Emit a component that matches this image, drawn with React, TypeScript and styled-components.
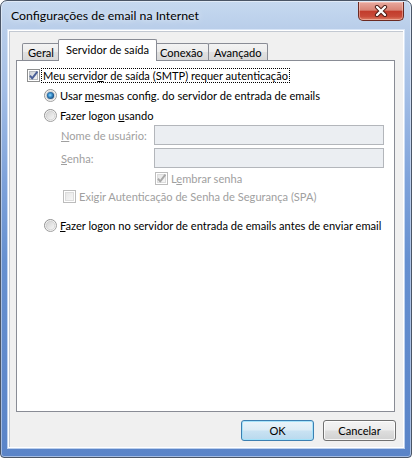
import React, { useId } from 'react';
import styled, { createGlobalStyle } from 'styled-components';

const GlobalStyle = createGlobalStyle`
  html, body {
    margin: 0;
    padding: 0;
    background: #ffffff;
  }
  body {
    font-family: "Segoe UI", Lato, "Noto Sans", sans-serif;
    font-size: 11.1px;
    color: #000;
  }
`;

const Window = styled.div`
  box-sizing: border-box;
  width: 412px;
  height: 458px;
  border: 1px solid #4a5566;
  border-radius: 7px 7px 4px 4px;
  padding: 0 7px 9px 7px;
  display: flex;
  flex-direction: column;
  background: linear-gradient(
    180deg,
    #c6d9f0 0px,
    #b8cde9 30px,
    #a3bee6 90px,
    #7ea2da 180px,
    #6690d0 260px,
    #5a84c8 100%
  );
  box-shadow: inset 0 0 0 1px rgba(255, 255, 255, 0.45);
`;

const TitleBar = styled.div`
  height: 29px;
  display: flex;
  align-items: center;
  justify-content: space-between;
`;

const Title = styled.div`
  padding-left: 3px;
  font-size: 12.3px;
  color: #000;
  text-shadow: 0 0 6px rgba(255, 255, 255, 0.9);
`;

const CloseButton = styled.div`
  align-self: flex-start;
  box-sizing: border-box;
  width: 46px;
  height: 19px;
  margin-top: 1px;
  border: 1px solid #6b2a22;
  border-top: none;
  border-radius: 0 0 5px 5px;
  background: linear-gradient(180deg, #e8a99f 0%, #d98476 45%, #c23c2c 52%, #c84a38 80%, #de7f66 100%);
  box-shadow: inset 0 0 0 1px rgba(255, 220, 210, 0.45);
  display: flex;
  align-items: center;
  justify-content: center;
`;

const Client = styled.div`
  flex: 1;
  box-sizing: border-box;
  display: flex;
  flex-direction: column;
  background: #f0f0f0;
  border: 1px solid #ffffff;
  box-shadow: inset 1px 1px 0 #c3c9d2, 0 0 0 1px rgba(230, 240, 252, 0.7);
  padding: 8px 8px 6px 7px;
`;

const TabStrip = styled.div`
  display: flex;
  align-items: flex-end;
  height: 22px;
  padding-left: 6px;
  margin-bottom: -1px;
  position: relative;
  z-index: 1;
`;

const Tab = styled.div<{ $active?: boolean }>`
  box-sizing: border-box;
  display: flex;
  align-items: center;
  justify-content: center;
  border: 1px solid #898c95;
  border-bottom: none;
  border-radius: 2px 2px 0 0;
  white-space: nowrap;
  height: ${(p) => (p.$active ? '22px' : '17px')};
  padding: ${(p) => (p.$active ? '0 7px 2px' : '0 5px')};
  margin: ${(p) => (p.$active ? '0 -2px 0 -2px' : '0 0 1px -1px')};
  background: ${(p) =>
    p.$active ? '#ffffff' : 'linear-gradient(180deg, #f3f3f3 0%, #ececec 50%, #e1e1e1 51%, #d8d8d8 100%)'};
  position: relative;
  z-index: ${(p) => (p.$active ? 2 : 1)};

  &:first-child {
    margin-left: 0;
  }
`;

const Panel = styled.div`
  flex: 1;
  box-sizing: border-box;
  background: #ffffff;
  border: 1px solid #898c95;
  padding: 6px 10px 0 10px;
  display: flex;
  flex-direction: column;
`;

const Row = styled.div<{ $indent?: number; $gap?: number }>`
  display: flex;
  align-items: center;
  height: 16px;
  margin-left: ${(p) => p.$indent ?? 0}px;
  margin-top: ${(p) => p.$gap ?? 0}px;
  white-space: nowrap;
`;

const Text = styled.span<{ $disabled?: boolean }>`
  margin-left: 3px;
  color: ${(p) => (p.$disabled ? '#a0a0a0' : '#000000')};
`;

const FocusText = styled.span`
  margin-left: 1px;
  padding: 0 1px 0 1px;
  line-height: 13px;
  border: 1px dotted #000;
`;

const FieldRow = styled.div<{ $gap?: number }>`
  display: flex;
  align-items: center;
  margin-left: 34px;
  margin-top: ${(p) => p.$gap ?? 0}px;
`;

const FieldLabel = styled.span`
  width: 94px;
  color: #a0a0a0;
  white-space: nowrap;
`;

const TextBox = styled.div`
  box-sizing: border-box;
  width: 233px;
  height: 20px;
  border: 1px solid #b3b6bb;
  background: #ebeef2;
`;

const ButtonBar = styled.div`
  display: flex;
  justify-content: flex-end;
  gap: 9px;
  margin-top: 8px;
  margin-right: -1px;
`;

const Button = styled.div<{ $default?: boolean }>`
  box-sizing: border-box;
  width: 73px;
  height: 21px;
  display: flex;
  align-items: center;
  justify-content: center;
  border-radius: 3px;
  border: 1px solid ${(p) => (p.$default ? '#3c7fb1' : '#707070')};
  background: ${(p) =>
    p.$default
      ? 'linear-gradient(180deg, #eaf4fa 0%, #dcecf6 48%, #c9e2f2 52%, #b9d9ee 100%)'
      : 'linear-gradient(180deg, #f4f4f4 0%, #ececec 48%, #dedede 52%, #d1d1d1 100%)'};
  box-shadow: inset 0 0 0 1px ${(p) => (p.$default ? 'rgba(160, 225, 250, 0.9)' : 'rgba(255, 255, 255, 0.8)')};
  color: #000;
`;

const Svg = styled.svg`
  flex: none;
  display: block;
`;

const CloseGlyph = () => (
  <Svg width="14" height="12" viewBox="0 0 14 12">
    <path d="M3 2 L11 10 M11 2 L3 10" stroke="#4a1a14" strokeWidth="4.2" strokeLinecap="round" fill="none" />
    <path d="M3 2 L11 10 M11 2 L3 10" stroke="#ffffff" strokeWidth="2.4" strokeLinecap="round" fill="none" />
  </Svg>
);

const CheckBox = ({ checked, disabled }: { checked?: boolean; disabled?: boolean }) => {
  const id = useId();
  return (
    <Svg width="13" height="13" viewBox="0 0 13 13">
      <defs>
        <linearGradient id={`${id}f`} x1="0" y1="0" x2="1" y2="1">
          <stop offset="0" stopColor={disabled ? '#e6e6e6' : '#cbcfd5'} />
          <stop offset="1" stopColor="#f7f7f7" />
        </linearGradient>
      </defs>
      <rect x="0.5" y="0.5" width="12" height="12" fill="#ffffff" stroke={disabled ? '#bcbcbc' : '#8e8f8f'} />
      <rect x="2.5" y="2.5" width="8" height="8" fill={`url(#${id}f)`} stroke={disabled ? '#dcdcdc' : '#b5b9bf'} />
      {checked && (
        <path
          d="M3 6.6 L5.2 9.4 L10.4 2.6"
          stroke={disabled ? '#a8a8a8' : '#4a5f97'}
          strokeWidth="1.9"
          fill="none"
          strokeLinejoin="round"
        />
      )}
    </Svg>
  );
};

const Radio = ({ checked }: { checked?: boolean }) => {
  const id = useId();
  return (
    <Svg width="13" height="13" viewBox="0 0 13 13">
      <defs>
        <linearGradient id={`${id}o`} x1="0" y1="0" x2="1" y2="1">
          <stop offset="0" stopColor="#8a8a8a" />
          <stop offset="1" stopColor="#a8a8a8" />
        </linearGradient>
        <linearGradient id={`${id}i`} x1="0" y1="0" x2="1" y2="1">
          <stop offset="0" stopColor="#cfcfcf" />
          <stop offset="1" stopColor="#fafafa" />
        </linearGradient>
        <radialGradient id={`${id}d`} cx="0.45" cy="0.45" r="0.6">
          <stop offset="0" stopColor="#8fdcff" />
          <stop offset="0.45" stopColor="#3a8cc9" />
          <stop offset="1" stopColor="#12406f" />
        </radialGradient>
      </defs>
      <circle cx="6.5" cy="6.5" r="6" fill="#f4f4f4" stroke={`url(#${id}o)`} />
      <circle cx="6.5" cy="6.5" r="4.3" fill={`url(#${id}i)`} stroke="#c4c4c4" strokeWidth="0.6" />
      {checked && <circle cx="6.5" cy="6.5" r="3.6" fill={`url(#${id}d)`} />}
    </Svg>
  );
};

const App: React.FC = () => {
  return (
    <>
      <GlobalStyle />
      <Window>
        <TitleBar>
          <Title>Configurações de email na Internet</Title>
          <CloseButton>
            <CloseGlyph />
          </CloseButton>
        </TitleBar>
        <Client>
          <TabStrip>
            <Tab>Geral</Tab>
            <Tab $active>Servidor de saída</Tab>
            <Tab>Conexão</Tab>
            <Tab>Avançado</Tab>
          </TabStrip>
          <Panel>
            <Row>
              <CheckBox checked />
              <FocusText>
                Meu servid<u>o</u>r de saída (SMTP) requer autenticação
              </FocusText>
            </Row>
            <Row $indent={17} $gap={4}>
              <Radio checked />
              <Text>
                Usar <u>m</u>esmas config. do servidor de entrada de emails
              </Text>
            </Row>
            <Row $indent={17} $gap={4}>
              <Radio />
              <Text>
                Fazer logon <u>u</u>sando
              </Text>
            </Row>
            <FieldRow $gap={2}>
              <FieldLabel>
                <u>N</u>ome de usuário:
              </FieldLabel>
              <TextBox />
            </FieldRow>
            <FieldRow $gap={3}>
              <FieldLabel>
                <u>S</u>enha:
              </FieldLabel>
              <TextBox />
            </FieldRow>
            <Row $indent={128} $gap={2}>
              <CheckBox checked disabled />
              <Text $disabled>
                L<u>e</u>mbrar senha
              </Text>
            </Row>
            <Row $indent={36} $gap={2}>
              <CheckBox disabled />
              <Text $disabled>
                Exi<u>g</u>ir Autenticação de Senha de Segurança (SPA)
              </Text>
            </Row>
            <Row $indent={17} $gap={13}>
              <Radio />
              <Text>
                <u>F</u>azer logon no servidor de entrada de emails antes de enviar email
              </Text>
            </Row>
          </Panel>
          <ButtonBar>
            <Button $default>OK</Button>
            <Button>Cancelar</Button>
          </ButtonBar>
        </Client>
      </Window>
    </>
  );
};

export default App;
